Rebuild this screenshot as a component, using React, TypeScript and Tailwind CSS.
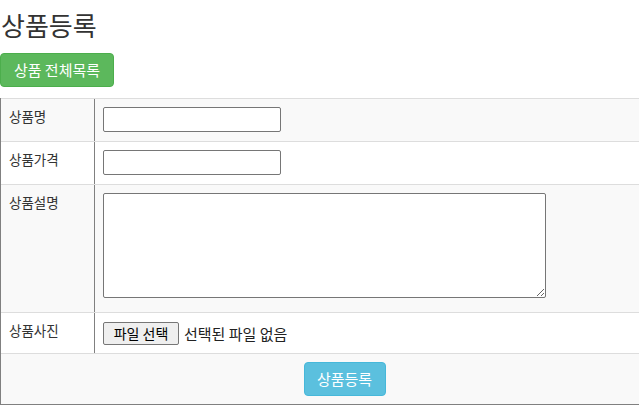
export default function App() {
  const font = { fontFamily: '"Noto Sans CJK KR", "Noto Sans", sans-serif' };

  return (
    <div
      className="w-[639px] h-[409px] overflow-hidden bg-white text-[#333] font-['Noto_Sans_CJK_KR',sans-serif]"
      style={font}
    >
      <div className="pt-[11px]">
        <h3 className="text-[26px] leading-[28px] font-normal pl-[1px]">상품등록</h3>

        <button className="mt-[14px] h-[34px] w-[114px] text-[15px] leading-5 text-white bg-[#5cb85c] border border-[#4cae4c] rounded-[4px]">
          상품 전체목록
        </button>

        <div className="mt-[11px] w-[688px] border-l border-b border-[#808080] text-[13.5px] leading-5">
          <div className="flex h-[43px] border-t border-[#ddd] bg-[#f9f9f9]">
            <div className="w-[94px] shrink-0 px-2 pt-[7px] border-r border-[#808080]">상품명</div>
            <div className="pl-2 pt-2">
              <input className="block w-[178px] h-[25px] border border-[#767676] rounded-[2px] bg-white" />
            </div>
          </div>

          <div className="flex h-[43px] border-t border-[#ddd] bg-white">
            <div className="w-[94px] shrink-0 px-2 pt-[7px] border-r border-[#808080]">상품가격</div>
            <div className="pl-2 pt-2">
              <input className="block w-[178px] h-[25px] border border-[#767676] rounded-[2px] bg-white" />
            </div>
          </div>

          <div className="flex h-[128px] border-t border-[#ddd] bg-[#f9f9f9]">
            <div className="w-[94px] shrink-0 px-2 pt-[7px] border-r border-[#808080]">상품설명</div>
            <div className="pl-2 pt-2">
              <textarea className="block w-[443px] h-[105px] border border-[#767676] rounded-[2px] bg-white resize" />
            </div>
          </div>

          <div className="flex h-[41px] border-t border-[#ddd] bg-white">
            <div className="w-[94px] shrink-0 px-2 pt-[7px] border-r border-[#808080]">상품사진</div>
            <div className="pl-2 pt-[9px] flex items-start">
              <button className="h-[23px] w-[76px] text-[14px] leading-[21px] text-black bg-[#efefef] border border-[#767676] rounded-[2px]">
                파일 선택
              </button>
              <span className="ml-[5px] text-[15px] leading-[23px] text-[#222]">선택된 파일 없음</span>
            </div>
          </div>

          <div className="flex justify-center h-[51px] border-t border-[#ddd] bg-[#f9f9f9] pt-2">
            <button className="h-[34px] w-[82px] text-[15px] leading-5 text-white bg-[#5bc0de] border border-[#46b8da] rounded-[4px]">
              상품등록
            </button>
          </div>
        </div>
      </div>
    </div>
  );
}
